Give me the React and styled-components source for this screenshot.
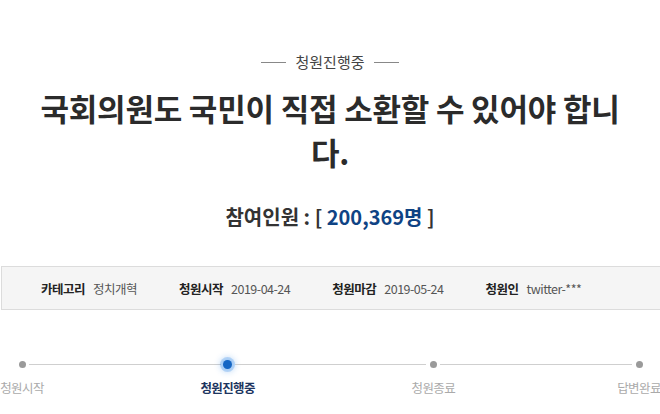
import styled, { createGlobalStyle } from "styled-components";

const GlobalStyle = createGlobalStyle`
    html, body {
        margin: 0;
        padding: 0;
        background: #fff;
        overflow: hidden;
    }
    body {
        font-family: "Noto Sans CJK KR", "Noto Sans", sans-serif;
        color: #333;
    }
`

const info = [
    { label: "카테고리", value: "정치개혁" },
    { label: "청원시작", value: "2019-04-24" },
    { label: "청원마감", value: "2019-05-24" },
    { label: "청원인", value: "twitter-***" },
]

const steps = [
    { name: "청원시작" },
    { name: "청원진행중", active: true },
    { name: "청원종료" },
    { name: "답변완료" },
]

const App = () => {
    return (
        <Page>
            <GlobalStyle />
            <Status>청원진행중</Status>
            <Title>국회의원도 국민이 직접 소환할 수 있어야 합니다.</Title>
            <Count>
                참여인원 : [ <Num>200,369명</Num> ]
            </Count>
            <InfoBox>
                {info.map((item) => (
                    <InfoItem key={item.label}>
                        <InfoLabel>{item.label}</InfoLabel>
                        <InfoValue>{item.value}</InfoValue>
                    </InfoItem>
                ))}
            </InfoBox>
            <Track>
                {steps.map((s, i) => (
                    <StepGroup key={s.name} $last={i === steps.length - 1}>
                        <Step>
                            <DotArea>
                                <Dot $active={s.active} />
                            </DotArea>
                            <StepName $active={s.active}>{s.name}</StepName>
                        </Step>
                        {i < steps.length - 1 && <Connector />}
                    </StepGroup>
                ))}
            </Track>
        </Page>
    );
}

export default App;

const Page = styled.div`
    width: 660px;
    height: 414px;
    display: flex;
    flex-direction: column;
    padding-top: 52px;
    box-sizing: border-box;
`

const Status = styled.div`
    display: flex;
    align-items: center;
    justify-content: center;
    gap: 9px;
    font-size: 15px;
    line-height: 20px;
    color: #444;

    &::before, &::after {
        content: "";
        width: 25px;
        height: 1px;
        background: #888;
    }
`

const Title = styled.h1`
    margin: 14px 26px 0;
    font-size: 31px;
    line-height: 44px;
    font-weight: 700;
    text-align: center;
    color: #2b2b2b;
    letter-spacing: -0.2px;
`

const Count = styled.div`
    margin-top: 29px;
    font-size: 20px;
    line-height: 28px;
    font-weight: 700;
    text-align: center;
    color: #333;
`

const Num = styled.span`
    color: #0f4384;
`

const InfoBox = styled.div`
    margin: 35px -20px 0 1px;
    height: 44px;
    box-sizing: border-box;
    border: 1px solid #dcdcdc;
    background: #f5f5f5;
    display: flex;
    align-items: center;
    gap: 42px;
    padding-left: 39px;
`

const InfoItem = styled.div`
    display: flex;
    align-items: baseline;
    gap: 8px;
    font-size: 12.5px;
    letter-spacing: -0.5px;
`

const InfoLabel = styled.span`
    font-weight: 700;
    color: #222;
`

const InfoValue = styled.span`
    color: #555;
`

const Track = styled.div`
    margin-top: 46px;
    display: flex;
    padding: 0 14px 0 15px;
`

const StepGroup = styled.div`
    display: flex;
    flex: ${(p) => (p.$last ? "0 0 auto" : "1")};
`

const Step = styled.div`
    width: 14px;
    display: flex;
    flex-direction: column;
    align-items: center;
`

const DotArea = styled.div`
    height: 16px;
    width: 14px;
    display: flex;
    align-items: center;
    justify-content: center;
`

const Dot = styled.span`
    width: ${(p) => (p.$active ? "9px" : "7px")};
    height: ${(p) => (p.$active ? "9px" : "7px")};
    border-radius: 50%;
    background: ${(p) => (p.$active ? "#1566c4" : "#9a9a9a")};
    box-shadow: ${(p) => (p.$active ? "0 0 0 3px rgba(40, 130, 230, 0.25), 0 0 6px 3px rgba(40, 130, 230, 0.3)" : "none")};
`

const StepName = styled.span`
    margin-top: 7px;
    white-space: nowrap;
    font-size: 12.5px;
    line-height: 18px;
    letter-spacing: -0.6px;
    font-weight: ${(p) => (p.$active ? 700 : 400)};
    color: ${(p) => (p.$active ? "#1d3560" : "#aaa")};
`

const Connector = styled.div`
    flex: 1;
    height: 1px;
    margin-top: 7.5px;
    background: #cfcfcf;
`
